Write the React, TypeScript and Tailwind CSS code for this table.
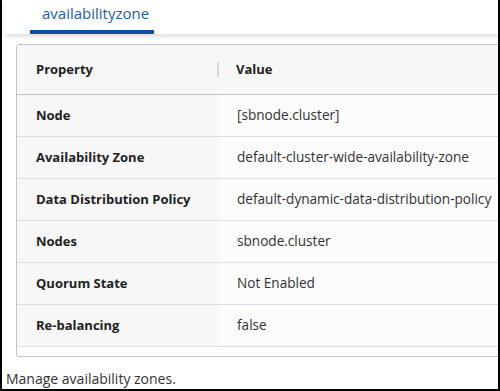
import React from "react";

const rows: [string, string][] = [
  ["Node", "[sbnode.cluster]"],
  ["Availability Zone", "default-cluster-wide-availability-zone"],
  ["Data Distribution Policy", "default-dynamic-data-distribution-policy"],
  ["Nodes", "sbnode.cluster"],
  ["Quorum State", "Not Enabled"],
  ["Re-balancing", "false"],
];

export default function App() {
  return (
    <div
      className="w-[500px] h-[391px] bg-white border-x-2 border-b-2 border-black overflow-hidden flex flex-col text-[#222]"
      style={{ fontFamily: '"Open Sans", "Noto Sans", sans-serif' }}
    >
      {/* tab bar */}
      <div className="ml-[3px] h-[34px] bg-white shadow-[0_3px_4px_rgba(0,0,0,0.12)] flex items-end pl-[25px] relative z-10">
        <div className="w-[124px] h-[34px] border-b-4 border-[#0d4f9e] pl-[12px] text-[15px] leading-[26px] text-[#1f5ea8]">
          availabilityzone
        </div>
      </div>

      {/* properties card */}
      <div className="ml-[14px] mt-[10px] w-[520px] h-[313px] border border-[#c3c3cc] rounded-[3px] shrink-0">
        <div className="flex h-[50px] bg-[#f7f7f7] border-b border-[#c3c3cc] text-[13px] font-bold">
          <div className="w-[202px] pl-[19px] flex items-center justify-between">
            <span>Property</span>
            <span className="w-[2px] h-[15px] bg-[#d6d6d6]" />
          </div>
          <div className="pl-[17px] flex items-center">Value</div>
        </div>
        {rows.map(([k, v]) => (
          <div key={k} className="flex h-[42px] border-b border-[#dcdde6]">
            <div className="w-[202px] pl-[19px] bg-[#f7f7f7] flex items-center font-bold text-[13px]">{k}</div>
            <div className="flex-1 pl-[18px] bg-[#fcfcfc] flex items-center text-[13.6px] text-[#333]">{v}</div>
          </div>
        ))}
      </div>

      <div className="ml-[4px] mt-[11px] text-[14px] text-[#333]">Manage availability zones.</div>
    </div>
  );
}
